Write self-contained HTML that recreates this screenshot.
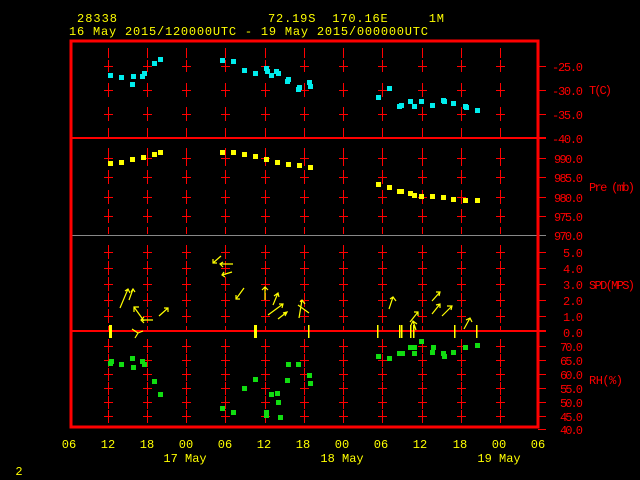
<!DOCTYPE html>
<html><head><meta charset="utf-8"><style>
html,body{margin:0;padding:0;background:#000;width:640px;height:480px;overflow:hidden}
svg{display:block}
text{font-family:"Liberation Mono","DejaVu Sans Mono",monospace;font-size:12px}
</style></head><body>
<svg width="640" height="480" viewBox="0 0 640 480" xmlns="http://www.w3.org/2000/svg">
<defs>
<path id="col" stroke="#f00" stroke-width="1" shape-rendering="crispEdges" fill="none" d="M0.5 48V58 M0.5 60V72M-4 66.5H5 M0.5 83V97M-4 90.5H5 M0.5 107V121M-4 114.5H5 M0.5 128V137 M0.5 148V166M-4 158.5H5 M0.5 170V184M-4 177.5H5 M0.5 190V204M-4 197.5H5 M0.5 209V223M-4 216.5H5 M0.5 227V234 M0.5 245V259M-4 252.5H5 M0.5 261V275M-4 268.5H5 M0.5 277V291M-4 284.5H5 M0.5 293V307M-4 300.5H5 M0.5 309V323M-4 316.5H5 M0.5 326V330 M0.5 339V353M-4 346.5H5 M0.5 354V367M-4 360.5H5 M0.5 368V381M-4 374.5H5 M0.5 382V395M-4 388.5H5 M0.5 396V409M-4 402.5H5 M0.5 410V423M-4 416.5H5"/>
</defs>
<g fill="#ff0">
<text x="77" y="22" textLength="40">28338</text>
<text x="268" y="22" textLength="176" xml:space="preserve">72.19S  170.16E     1M</text>
<text x="69" y="35" textLength="359">16 May 2015/120000UTC - 19 May 2015/000000UTC</text>
</g>
<g>
<use href="#col" x="108"/><use href="#col" x="147"/><use href="#col" x="186"/><use href="#col" x="225"/><use href="#col" x="265"/><use href="#col" x="304"/><use href="#col" x="343"/><use href="#col" x="382"/><use href="#col" x="422"/><use href="#col" x="461"/><use href="#col" x="500"/>
</g>
<rect x="71" y="137" width="475" height="2" fill="#f00"/>
<rect x="71" y="235" width="475" height="1" fill="#888"/>
<rect x="71" y="330" width="475" height="2" fill="#f00"/>
<g stroke="#f00" stroke-width="1" shape-rendering="crispEdges">
<path d="M538 66.5H546M538 90.5H546M538 114.5H546M538 158.5H546M538 177.5H546M538 197.5H546M538 216.5H546M538 252.5H546M538 268.5H546M538 284.5H546M538 300.5H546M538 316.5H546M538 346.5H546M538 360.5H546M538 374.5H546M538 388.5H546M538 402.5H546M538 416.5H546M538 429.5H546"/>
</g>
<rect x="71" y="41" width="467" height="386" fill="none" stroke="#f00" stroke-width="3" shape-rendering="crispEdges"/>
<g fill="#f00" font-size="11">
<text x="552" y="71" textLength="31">-25.0</text><text x="552" y="95" textLength="31">-30.0</text><text x="552" y="119" textLength="31">-35.0</text><text x="552" y="143" textLength="31">-40.0</text>
<text x="589" y="94" textLength="23">T(C)</text>
<text x="554" y="163" textLength="29">990.0</text><text x="554" y="182" textLength="29">985.0</text><text x="554" y="202" textLength="29">980.0</text><text x="554" y="221" textLength="29">975.0</text><text x="554" y="240" textLength="29">970.0</text>
<text x="589" y="191" textLength="46" xml:space="preserve">Pre (mb)</text>
<text x="563" y="257" textLength="20">5.0</text><text x="563" y="273" textLength="20">4.0</text><text x="563" y="289" textLength="20">3.0</text><text x="563" y="305" textLength="20">2.0</text><text x="563" y="321" textLength="20">1.0</text><text x="563" y="337" textLength="20">0.0</text>
<text x="589" y="289" textLength="46">SPD(MPS)</text>
<text x="560" y="351" textLength="23">70.0</text><text x="560" y="365" textLength="23">65.0</text><text x="560" y="379" textLength="23">60.0</text><text x="560" y="393" textLength="23">55.0</text><text x="560" y="407" textLength="23">50.0</text><text x="560" y="421" textLength="23">45.0</text><text x="560" y="434" textLength="23">40.0</text>
<text x="589" y="384" textLength="34">RH(%)</text>
</g>
<g fill="#ff0" text-anchor="middle">
<text x="69" y="448">06</text><text x="108" y="448">12</text><text x="147" y="448">18</text><text x="186" y="448">00</text><text x="225" y="448">06</text><text x="264" y="448">12</text><text x="303" y="448">18</text><text x="342" y="448">00</text><text x="381" y="448">06</text><text x="420" y="448">12</text><text x="460" y="448">18</text><text x="499" y="448">00</text><text x="538" y="448">06</text>
<text x="185" y="462">17 May</text><text x="342" y="462">18 May</text><text x="499" y="462">19 May</text>
<text x="19" y="475">2</text>
</g>
<g fill="#0ee">
<rect x="108" y="73" width="5" height="5"/><rect x="119" y="75" width="5" height="5"/><rect x="131" y="74" width="5" height="5"/><rect x="130" y="82" width="5" height="5"/><rect x="140" y="74" width="5" height="5"/><rect x="142" y="71" width="5" height="5"/><rect x="152" y="61" width="5" height="5"/><rect x="158" y="57" width="5" height="5"/>
<rect x="220" y="58" width="5" height="5"/><rect x="231" y="59" width="5" height="5"/><rect x="242" y="68" width="5" height="5"/><rect x="253" y="71" width="5" height="5"/><rect x="264" y="66" width="5" height="5"/><rect x="265" y="69" width="5" height="5"/><rect x="269" y="73" width="5" height="5"/><rect x="274" y="69" width="5" height="5"/><rect x="276" y="71" width="5" height="5"/><rect x="285" y="79" width="5" height="5"/><rect x="286" y="77" width="5" height="5"/><rect x="296" y="87" width="5" height="5"/><rect x="297" y="85" width="5" height="5"/><rect x="307" y="80" width="5" height="5"/><rect x="308" y="84" width="5" height="5"/>
<rect x="376" y="95" width="5" height="5"/><rect x="387" y="86" width="5" height="5"/><rect x="397" y="104" width="5" height="5"/><rect x="399" y="103" width="5" height="5"/><rect x="408" y="99" width="5" height="5"/><rect x="412" y="104" width="5" height="5"/><rect x="419" y="99" width="5" height="5"/><rect x="430" y="103" width="5" height="5"/><rect x="441" y="98" width="5" height="5"/><rect x="442" y="99" width="5" height="5"/><rect x="451" y="101" width="5" height="5"/><rect x="463" y="104" width="5" height="5"/><rect x="464" y="105" width="5" height="5"/><rect x="475" y="108" width="5" height="5"/>
</g>
<g fill="#ff0">
<rect x="108" y="161" width="5" height="5"/><rect x="119" y="160" width="5" height="5"/><rect x="130" y="157" width="5" height="5"/><rect x="141" y="155" width="5" height="5"/><rect x="152" y="152" width="5" height="5"/><rect x="158" y="150" width="5" height="5"/>
<rect x="220" y="150" width="5" height="5"/><rect x="231" y="150" width="5" height="5"/><rect x="242" y="152" width="5" height="5"/><rect x="253" y="154" width="5" height="5"/><rect x="264" y="157" width="5" height="5"/><rect x="275" y="160" width="5" height="5"/><rect x="286" y="162" width="5" height="5"/><rect x="297" y="163" width="5" height="5"/><rect x="308" y="165" width="5" height="5"/>
<rect x="376" y="182" width="5" height="5"/><rect x="387" y="185" width="5" height="5"/><rect x="397" y="189" width="5" height="5"/><rect x="399" y="189" width="5" height="5"/><rect x="408" y="191" width="5" height="5"/><rect x="412" y="193" width="5" height="5"/><rect x="419" y="194" width="5" height="5"/><rect x="430" y="194" width="5" height="5"/><rect x="441" y="195" width="5" height="5"/><rect x="451" y="197" width="5" height="5"/><rect x="463" y="198" width="5" height="5"/><rect x="475" y="198" width="5" height="5"/>
<rect x="109" y="325" width="3" height="13"/><rect x="254" y="325" width="3" height="13"/><rect x="308" y="325" width="1.5" height="13"/><rect x="377" y="325" width="1.5" height="13"/><rect x="399" y="325" width="1.5" height="13"/><rect x="401" y="325" width="1.5" height="13"/><rect x="410" y="325" width="1.5" height="13"/><rect x="413" y="325" width="1.5" height="13"/><rect x="454" y="325" width="1.5" height="13"/><rect x="476" y="325" width="1.5" height="13"/>
</g>
<g fill="#1d1">
<rect x="108" y="361" width="5" height="5"/><rect x="109" y="359" width="5" height="5"/><rect x="119" y="362" width="5" height="5"/><rect x="130" y="356" width="5" height="5"/><rect x="131" y="365" width="5" height="5"/><rect x="140" y="359" width="5" height="5"/><rect x="142" y="362" width="5" height="5"/><rect x="152" y="379" width="5" height="5"/><rect x="158" y="392" width="5" height="5"/>
<rect x="220" y="406" width="5" height="5"/><rect x="231" y="410" width="5" height="5"/><rect x="242" y="386" width="5" height="5"/><rect x="253" y="377" width="5" height="5"/><rect x="264" y="413" width="5" height="5"/><rect x="264" y="410" width="5" height="5"/><rect x="269" y="392" width="5" height="5"/><rect x="275" y="391" width="5" height="5"/><rect x="276" y="400" width="5" height="5"/><rect x="278" y="415" width="5" height="5"/><rect x="285" y="378" width="5" height="5"/><rect x="286" y="362" width="5" height="5"/><rect x="296" y="362" width="5" height="5"/><rect x="307" y="373" width="5" height="5"/><rect x="308" y="381" width="5" height="5"/>
<rect x="376" y="354" width="5" height="5"/><rect x="387" y="356" width="5" height="5"/><rect x="397" y="351" width="5" height="5"/><rect x="400" y="351" width="5" height="5"/><rect x="408" y="345" width="5" height="5"/><rect x="412" y="345" width="5" height="5"/><rect x="412" y="351" width="5" height="5"/><rect x="419" y="339" width="5" height="5"/><rect x="430" y="350" width="5" height="5"/><rect x="431" y="345" width="5" height="5"/><rect x="441" y="351" width="5" height="5"/><rect x="442" y="354" width="5" height="5"/><rect x="451" y="350" width="5" height="5"/><rect x="463" y="345" width="5" height="5"/><rect x="475" y="343" width="5" height="5"/>
</g>
<g stroke="#ff0" stroke-width="1.2" fill="none">
<path d="M120 308L128 289M125 291L128 289L130 293"/>
<path d="M129 300L133 289M131 292L133 289L135 292"/>
<path d="M144 321L134 307M134 312L134 307L139 307"/>
<path d="M153 320L141 320M144 317L141 320L144 323"/>
<path d="M159 316L168 308M164 308L168 308L168 312"/>
<path d="M132 329L138 333L135 338M138 333L143 331"/>
<path d="M221 256L213 263M213 259L213 263L217 263"/>
<path d="M233 264L220 264M223 262L220 264L223 267"/>
<path d="M232 272L222 275M224 272L222 275L225 277"/>
<path d="M244 288L236 299M236 295L236 299L240 299"/>
<path d="M265 300L265 287M262 290L265 287L268 290"/>
<path d="M273 305L278 293M274 296L278 293L279 297"/>
<path d="M268 315L283 304M279 304L283 304L282 308"/>
<path d="M278 319L287 312M283 313L287 312L285 316"/>
<path d="M299 318L302 300M300 302L302 300L305 304M298 305L309 313"/>
<path d="M389 309L393 297M390 299L393 297L396 301"/>
<path d="M410 322L418 312M414 312L418 312L418 316"/>
<path d="M416 330L413 321M411 325L413 321L417 324"/>
<path d="M432 301L440 292M436 292L440 292L439 296"/>
<path d="M432 314L440 304M436 305L440 304L440 308"/>
<path d="M442 316L452 306M447 306L452 306L451 310"/>
<path d="M464 329L470 318M466 320L470 318L472 322"/>
</g>
</svg>
</body></html>
